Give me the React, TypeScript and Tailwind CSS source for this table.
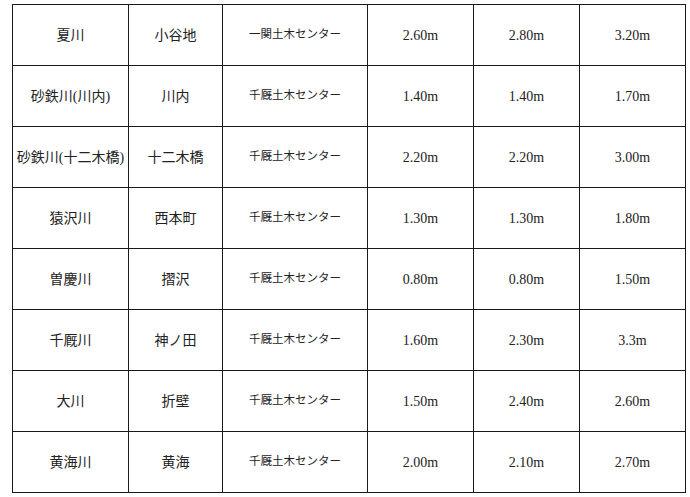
const rows = [
  ['夏川', '小谷地', '一関土木センター', '2.60m', '2.80m', '3.20m'],
  ['砂鉄川(川内)', '川内', '千厩土木センター', '1.40m', '1.40m', '1.70m'],
  ['砂鉄川(十二木橋)', '十二木橋', '千厩土木センター', '2.20m', '2.20m', '3.00m'],
  ['猿沢川', '西本町', '千厩土木センター', '1.30m', '1.30m', '1.80m'],
  ['曽慶川', '摺沢', '千厩土木センター', '0.80m', '0.80m', '1.50m'],
  ['千厩川', '神ノ田', '千厩土木センター', '1.60m', '2.30m', '3.3m'],
  ['大川', '折壁', '千厩土木センター', '1.50m', '2.40m', '2.60m'],
  ['黄海川', '黄海', '千厩土木センター', '2.00m', '2.10m', '2.70m'],
];

const widths = ['w-[116px]', 'w-[94px]', 'w-[145px]', 'w-[106px]', 'w-[106px]', 'w-[106px]'];

export default function App() {
  return (
    <div className="w-[690px] h-[497px] bg-white pt-[4px] pl-[12px]">
      <table
        className="table-fixed border-collapse border-[1.5px] border-[#1a1a1a] text-[#222] text-center"
        style={{ fontFamily: '"Liberation Serif", "Noto Sans CJK JP", serif' }}
      >
        <tbody>
          {rows.map((r, i) => (
            <tr key={i}>
              {r.map((c, j) => (
                <td
                  key={j}
                  className={`${widths[j]} h-[61px] border-[1.5px] border-[#1a1a1a] p-0 align-middle ${
                    j === 2 ? 'text-[11.5px]' : 'text-[14px]'
                  }`}
                >
                  {c}
                </td>
              ))}
            </tr>
          ))}
        </tbody>
      </table>
    </div>
  );
}
